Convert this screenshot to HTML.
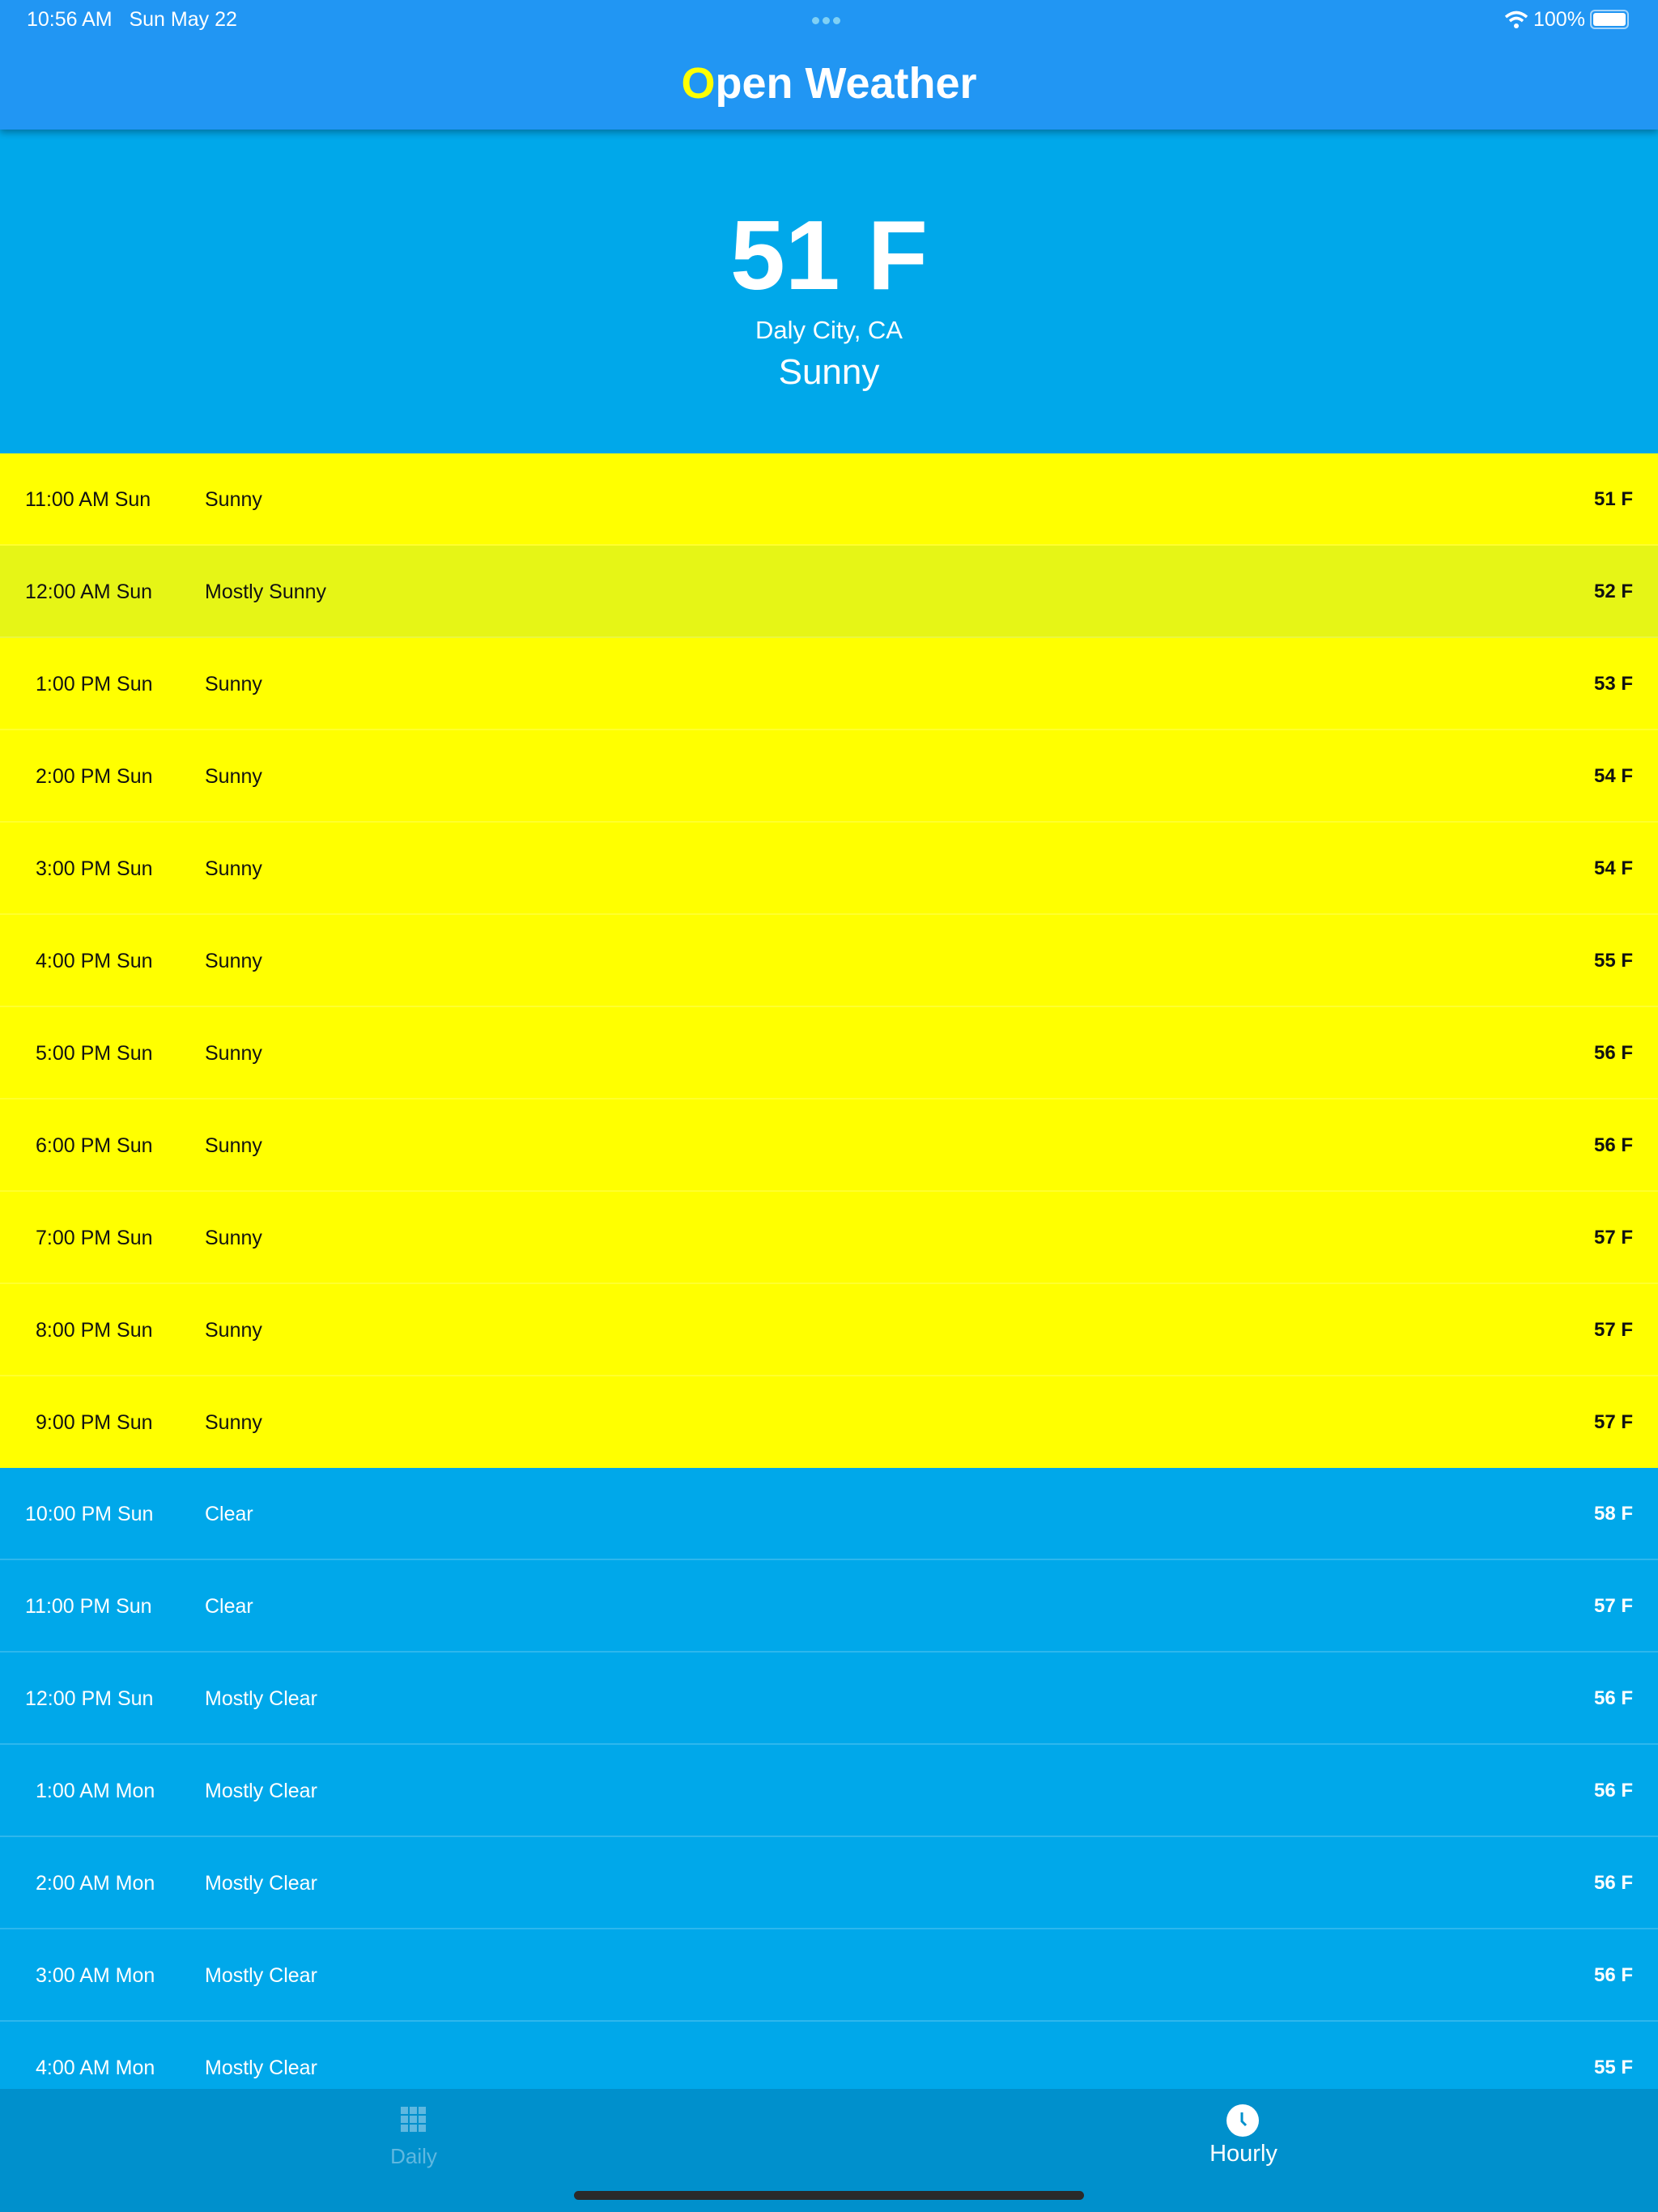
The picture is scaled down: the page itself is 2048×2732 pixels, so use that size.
<!DOCTYPE html>
<html><head><meta charset="utf-8"><style>
*{margin:0;padding:0;box-sizing:border-box}
body{width:2048px;height:2732px;position:relative;overflow:hidden;background:#00A8EA;font-family:"Liberation Sans",sans-serif}
.abs{position:absolute}
#hdr{left:0;top:0;width:2048px;height:160px;background:#2196F3;box-shadow:0 4px 8px rgba(0,0,0,0.3);z-index:2}
#hero{left:0;top:160px;width:2048px;height:400px;background:#00A8EA}
.row{position:absolute;left:0;width:2048px;height:114px;border-bottom:2px solid rgba(255,255,255,0.18)}
.row span{position:absolute;top:0;line-height:114px;font-size:25px}
.y{background:#FFFF00;color:#111}
.m{background:#E6F516;color:#111}
.b{background:#00A8EA;color:#fff}
.t{font-weight:bold;right:31px;font-size:24px!important}
.c{left:253px}
#tab{left:0;top:2580px;width:2048px;height:152px;background:#0090CC;z-index:3}
</style></head><body>
<div id="hdr" class="abs">
 <div class="abs" style="left:33px;top:10px;font-size:25px;color:#fff">10:56 AM&nbsp;&nbsp; Sun May 22</div>
 <div class="abs" style="left:1003px;top:21px;width:9px;height:9px;border-radius:50%;background:#7fd0f5;box-shadow:13px 0 0 #7fd0f5,26px 0 0 #7fd0f5"></div>
 <svg class="abs" style="left:1858px;top:12px" width="30" height="24" viewBox="0 0 30 24"><path d="M2 9 Q15 -2 28 9" stroke="#fff" stroke-width="3.5" fill="none"/><path d="M7 14 Q15 7 23 14" stroke="#fff" stroke-width="3.5" fill="none"/><circle cx="15" cy="20" r="3" fill="#fff"/></svg>
 <div class="abs" style="left:1894px;top:10px;font-size:25px;color:#fff">100%</div>
 <div class="abs" style="left:1964px;top:12px;width:48px;height:24px;border:2px solid rgba(255,255,255,0.6);border-radius:6px;padding:2px"><div style="width:100%;height:100%;background:#fff;border-radius:3px"></div></div>
 <div class="abs" style="left:0;top:70px;width:2048px;text-align:center;font-size:54px;font-weight:bold;color:#fff;line-height:66px"><span style="color:#FFFF00">O</span>pen Weather</div>
</div>
<div id="hero" class="abs">
 <div class="abs" style="left:0;top:88px;width:2048px;text-align:center;color:#fff;font-weight:bold;font-size:122px;line-height:134px">51 F</div>
 <div class="abs" style="left:0;top:228px;width:2048px;text-align:center;color:#fff;font-size:31px;line-height:40px">Daly City, CA</div>
 <div class="abs" style="left:0;top:272px;width:2048px;text-align:center;color:#fff;font-size:44px;line-height:56px">Sunny</div>
</div>
<div class="row y" style="top:560px"><span style="left:31px">11:00 AM Sun</span><span class="c">Sunny</span><span class="t">51 F</span></div>
<div class="row m" style="top:674px"><span style="left:31px">12:00 AM Sun</span><span class="c">Mostly Sunny</span><span class="t">52 F</span></div>
<div class="row y" style="top:788px"><span style="left:44px">1:00 PM Sun</span><span class="c">Sunny</span><span class="t">53 F</span></div>
<div class="row y" style="top:902px"><span style="left:44px">2:00 PM Sun</span><span class="c">Sunny</span><span class="t">54 F</span></div>
<div class="row y" style="top:1016px"><span style="left:44px">3:00 PM Sun</span><span class="c">Sunny</span><span class="t">54 F</span></div>
<div class="row y" style="top:1130px"><span style="left:44px">4:00 PM Sun</span><span class="c">Sunny</span><span class="t">55 F</span></div>
<div class="row y" style="top:1244px"><span style="left:44px">5:00 PM Sun</span><span class="c">Sunny</span><span class="t">56 F</span></div>
<div class="row y" style="top:1358px"><span style="left:44px">6:00 PM Sun</span><span class="c">Sunny</span><span class="t">56 F</span></div>
<div class="row y" style="top:1472px"><span style="left:44px">7:00 PM Sun</span><span class="c">Sunny</span><span class="t">57 F</span></div>
<div class="row y" style="top:1586px"><span style="left:44px">8:00 PM Sun</span><span class="c">Sunny</span><span class="t">57 F</span></div>
<div class="row y" style="top:1700px;height:113px;border-bottom:none"><span style="left:44px">9:00 PM Sun</span><span class="c">Sunny</span><span class="t">57 F</span></div>
<div class="row b" style="top:1813px"><span style="left:31px">10:00 PM Sun</span><span class="c">Clear</span><span class="t">58 F</span></div>
<div class="row b" style="top:1927px"><span style="left:31px">11:00 PM Sun</span><span class="c">Clear</span><span class="t">57 F</span></div>
<div class="row b" style="top:2041px"><span style="left:31px">12:00 PM Sun</span><span class="c">Mostly Clear</span><span class="t">56 F</span></div>
<div class="row b" style="top:2155px"><span style="left:44px">1:00 AM Mon</span><span class="c">Mostly Clear</span><span class="t">56 F</span></div>
<div class="row b" style="top:2269px"><span style="left:44px">2:00 AM Mon</span><span class="c">Mostly Clear</span><span class="t">56 F</span></div>
<div class="row b" style="top:2383px"><span style="left:44px">3:00 AM Mon</span><span class="c">Mostly Clear</span><span class="t">56 F</span></div>
<div class="row b" style="top:2497px"><span style="left:44px">4:00 AM Mon</span><span class="c">Mostly Clear</span><span class="t">55 F</span></div>
<div id="tab" class="abs">
 <svg class="abs" style="left:495px;top:22px" width="32" height="32" viewBox="0 0 32 32" fill="#5fb8e0"><rect x="0" y="0" width="9" height="9"/><rect x="11" y="0" width="9" height="9"/><rect x="22" y="0" width="9" height="9"/><rect x="0" y="11" width="9" height="9"/><rect x="11" y="11" width="9" height="9"/><rect x="22" y="11" width="9" height="9"/><rect x="0" y="22" width="9" height="9"/><rect x="11" y="22" width="9" height="9"/><rect x="22" y="22" width="9" height="9"/></svg>
 <div class="abs" style="left:411px;top:68px;width:200px;text-align:center;font-size:26px;color:#5fb8e0">Daily</div>
 <svg class="abs" style="left:1515px;top:19px" width="40" height="40" viewBox="0 0 40 40"><circle cx="20" cy="20" r="20" fill="#fff"/><path d="M19 10 L19 21 L24 26" stroke="#0090CC" stroke-width="3" fill="none"/></svg>
 <div class="abs" style="left:1436px;top:64px;width:200px;text-align:center;font-size:29px;color:#fff">Hourly</div>
 <div class="abs" style="left:709px;top:126px;width:630px;height:11px;border-radius:6px;background:#2a2a2a"></div>
</div>
</body></html>
